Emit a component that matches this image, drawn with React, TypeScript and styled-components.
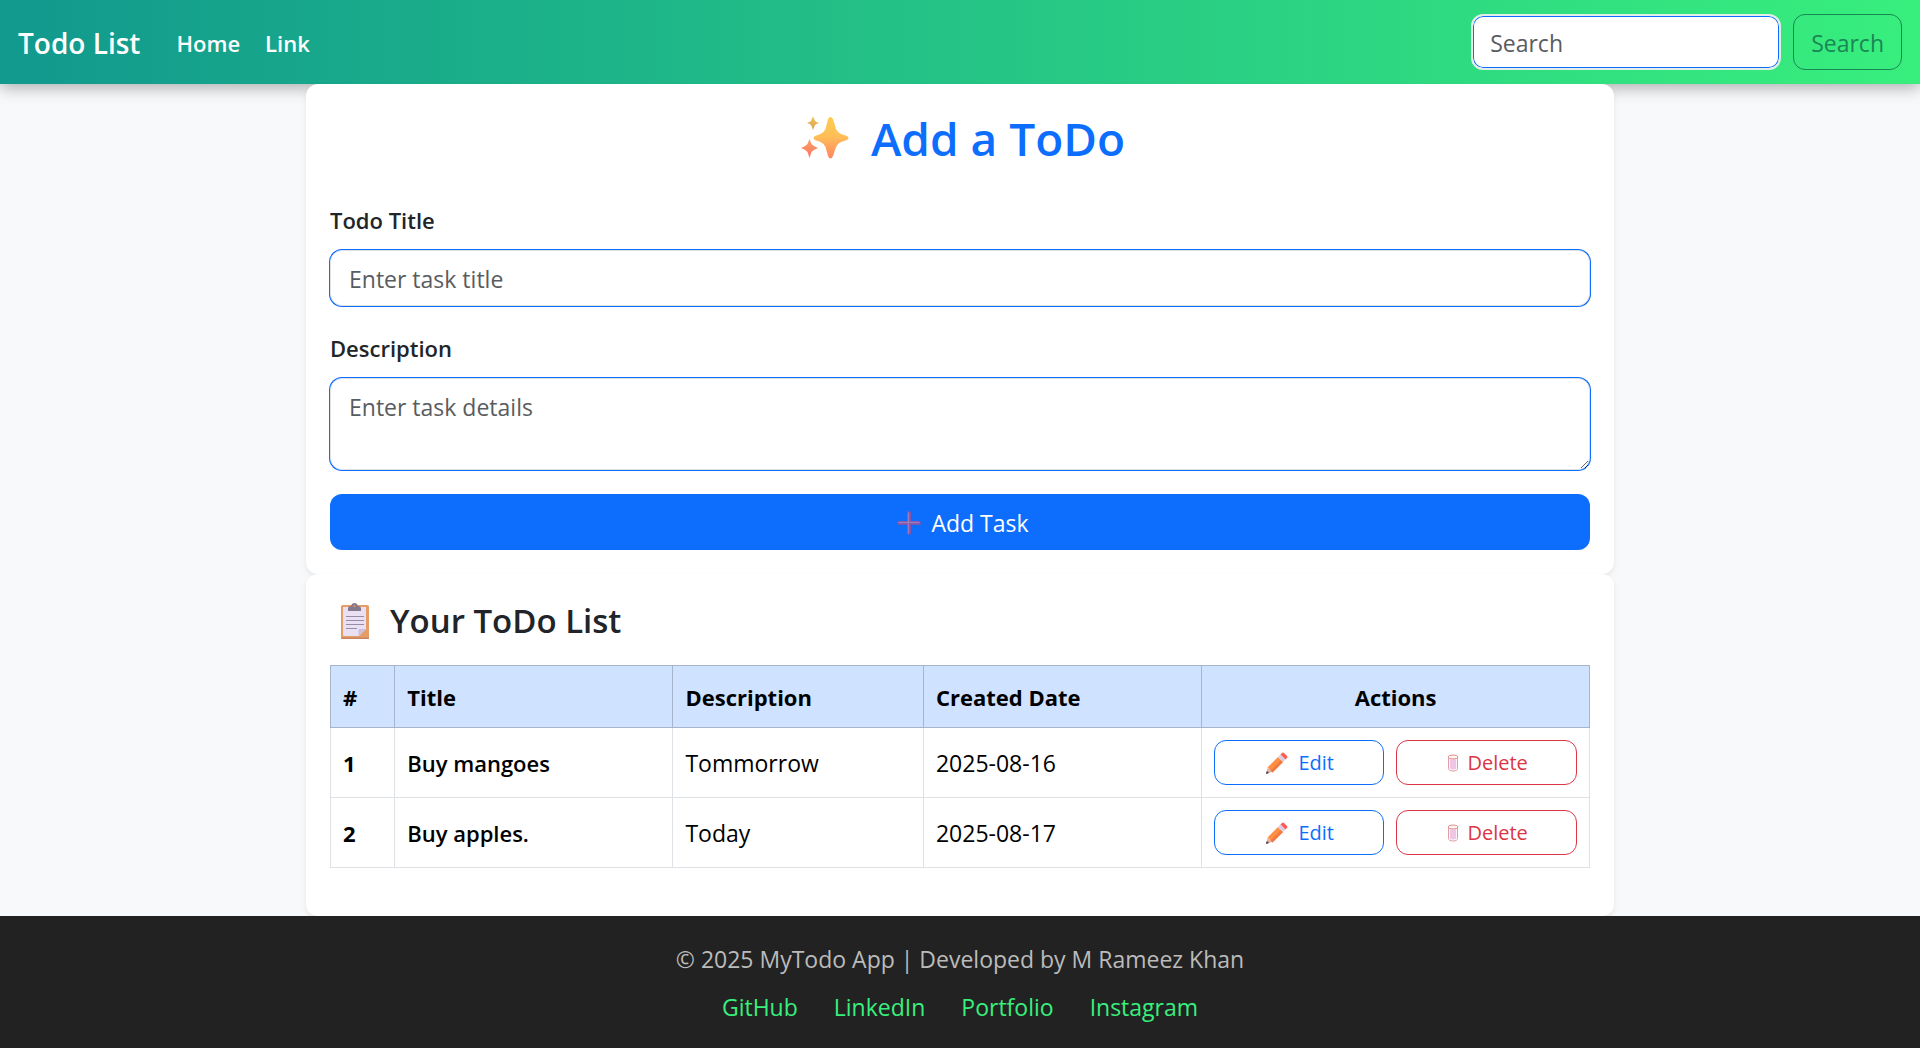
import React from 'react';
import styled, { createGlobalStyle } from 'styled-components';

const GlobalStyle = createGlobalStyle`
  *, *::before, *::after { box-sizing: border-box; }
  body {
    margin: 0;
    background: #f8f9fb;
    color: #212529;
    font-family: "Segoe UI", "Open Sans", "Noto Sans", sans-serif;
    font-size: 23px;
    line-height: 36px;
  }
  input, textarea, button { font: inherit; }
`;

const Navbar = styled.header`
  display: flex;
  align-items: center;
  height: 84px;
  padding: 2px 18px 0;
  background: linear-gradient(90deg, #11998e, #38ef7d);
  box-shadow: 0 4px 15px rgba(0, 0, 0, 0.3);
`;

const Brand = styled.a`
  margin-right: 36px;
  color: #fff;
  font-size: 28px;
  font-weight: 600;
  text-decoration: none;
`;

const NavLinks = styled.nav`
  display: flex;
  gap: 25px;
  flex: 1;
`;

const NavLink = styled.a`
  color: #fff;
  font-size: 22px;
  font-weight: 600;
  text-decoration: none;
`;

const SearchForm = styled.form`
  display: flex;
  gap: 12px;
  padding-bottom: 2px;
`;

const SearchInput = styled.input`
  width: 310px;
  height: 56px;
  padding: 2px 17px 0;
  border: 2px solid #e3eee9;
  border-radius: 12px;
  background: #fff;
  box-shadow: inset 0 0 0 1px #0d6efd;
  color: #212529;
  outline: none;
  &::placeholder { color: #595c5f; opacity: 1; }
`;

const SearchButton = styled.button`
  height: 56px;
  padding: 2px 17px 0;
  border: 1px solid #198754;
  border-radius: 12px;
  background: transparent;
  color: #198754;
`;

const Main = styled.main`
  max-width: 1308px;
  margin: 0 auto;
`;

const Card = styled.section`
  padding: 24px;
  border-radius: 12px;
  background: #fff;
  box-shadow: 0 3px 6px rgba(0, 0, 0, 0.075);
`;

const PageTitle = styled.h1`
  display: flex;
  align-items: center;
  justify-content: center;
  gap: 22px;
  margin: 0 0 36px;
  padding: 2px 0 0 6px;
  color: #0d6efd;
  font-size: 46px;
  font-weight: 600;
  line-height: 56px;
`;

const SectionTitle = styled.h2`
  display: flex;
  align-items: center;
  gap: 20px;
  margin: 0 0 24px;
  padding: 2px 0 0 10px;
  font-size: 33px;
  font-weight: 600;
  line-height: 41px;
`;

const Field = styled.div`
  display: flex;
  flex-direction: column;
  gap: 12px;
  margin-bottom: 24px;
`;

const Label = styled.label`
  font-size: 22px;
  font-weight: 600;
`;

const TextInput = styled.input`
  width: 100%;
  height: 56px;
  padding: 2px 18px 0;
  border: 1px solid #dee2e6;
  border-radius: 12px;
  background: #fff;
  box-shadow: 0 0 0 1px #0d6efd;
  color: #212529;
  outline: none;
  &::placeholder { color: #595c5f; opacity: 1; }
`;

const TextArea = styled(TextInput)`
  display: block;
  height: 92px;
  padding: 10px 18px;
  resize: vertical;
`;

const AddButton = styled.button`
  display: flex;
  align-items: center;
  justify-content: center;
  gap: 10px;
  width: 100%;
  height: 56px;
  padding: 2px 0 0 6px;
  border: 0;
  border-radius: 12px;
  background: #0d6efd;
  color: #fff;
`;

const Table = styled.table`
  width: 100%;
  margin-bottom: 24px;
  border-collapse: collapse;
  table-layout: fixed;
  color: #000;
`;

const Col = styled.col<{ $share: number }>`
  width: ${(p) => p.$share}%;
`;

const HeadCell = styled.th<{ $center?: boolean }>`
  height: 62px;
  padding: 0 12px;
  border: 1px solid #a6b5cc;
  background: #cfe2ff;
  font-size: 22px;
  font-weight: 700;
  text-align: ${(p) => (p.$center ? 'center' : 'left')};
`;

const RowNumber = styled.th`
  padding: 12px;
  border: 1px solid #dee2e6;
  font-size: 22px;
  font-weight: 700;
  text-align: left;
`;

const Cell = styled.td<{ $strong?: boolean }>`
  padding: 12px;
  border: 1px solid #dee2e6;
  font-size: ${(p) => (p.$strong ? '22px' : '23px')};
  font-weight: ${(p) => (p.$strong ? 600 : 400)};
`;

const Actions = styled.div`
  display: flex;
  gap: 12px;
`;

const ActionButton = styled.button<{ $danger?: boolean }>`
  display: flex;
  align-items: center;
  justify-content: center;
  gap: ${(p) => (p.$danger ? 8 : 10)}px;
  flex: ${(p) => (p.$danger ? 181 : 170)} 1 0;
  height: 45px;
  padding: 0 0 0 2px;
  border: 1px solid currentColor;
  border-radius: 12px;
  background: #fff;
  color: ${(p) => (p.$danger ? '#dc3545' : '#0d6efd')};
  font-size: 20px;
`;

const Footer = styled.footer`
  display: flex;
  flex-direction: column;
  align-items: center;
  gap: 12px;
  padding: 25px 0 23px;
  background: #222;
  color: #bbb;
`;

const Copyright = styled.p`
  margin: 0;
`;

const FooterLinks = styled.nav`
  display: flex;
  gap: 36px;
`;

const FooterLink = styled.a`
  color: #38ef7d;
  text-decoration: none;
`;

const Sparkles = () => (
  <svg width="48" height="44" viewBox="0 0 48 44" aria-hidden="true">
    <defs>
      <linearGradient id="spark" x1="0" y1="0" x2="0" y2="1">
        <stop offset="0" stopColor="#fbcb50" />
        <stop offset="0.45" stopColor="#ffc057" />
        <stop offset="1" stopColor="#ff8560" />
      </linearGradient>
      <linearGradient id="sparkTop" x1="0" y1="0" x2="0" y2="1">
        <stop offset="0" stopColor="#f3bd50" />
        <stop offset="1" stopColor="#d8a65b" />
      </linearGradient>
      <linearGradient id="sparkLow" x1="0" y1="0" x2="0" y2="1">
        <stop offset="0" stopColor="#f4a363" />
        <stop offset="1" stopColor="#ff7465" />
      </linearGradient>
    </defs>
    <path fill="url(#spark)" d="M27 3Q29.500-1 32 3L35 13Q36.500 16.500 40 18L46 20Q49 22 46 24L40 26Q36.500 27.500 35 31L32 40Q29.500 45 27 40L24.500 31Q23 27.500 19.500 26L14 24Q11 22 14 20L19.500 18Q23 16.500 24.500 13Z" />
    <path fill="url(#sparkTop)" d="M12 0.500L14 5Q15 6 18 7Q15 8 14 9L12 14L10 9Q9 8 6 7Q9 6 10 5Z" />
    <path fill="url(#sparkLow)" d="M8.500 23L10.500 28Q12 30 17 32Q12 34 10.500 36L8.500 42L6.500 36Q5 34 0 32Q5 30 6.500 28Z" />
  </svg>
);

const PlusSign = () => (
  <svg width="24" height="24" viewBox="0 0 24 24" aria-hidden="true">
    <path d="M12 2V22M2 12H22" stroke="#8053b3" strokeWidth="4" strokeLinecap="round" />
    <path d="M11.500 2V22M2 11.500H22" stroke="#9a7bb6" strokeWidth="1.500" strokeLinecap="round" />
  </svg>
);

const Clipboard = () => (
  <svg width="30" height="36" viewBox="0 0 30 36" aria-hidden="true">
    <rect x="1" y="2" width="28" height="34" rx="1.500" fill="#e59d65" />
    <path d="M1 34.500H29V35Q29 36 28 36H2Q1 36 1 35Z" fill="#c98364" />
    <path d="M3 4H26V26L19 33H4Q3 33 3 32Z" fill="#e9e0f3" />
    <path d="M18.500 33V27Q18.500 26 19.500 26H26Z" fill="#cdbfdc" />
    <path d="M8 8V5Q8 3.500 11 3Q12 0 14.500 0T18 3Q21 3.500 21 5V8Z" fill="#83798a" />
    <circle cx="14.500" cy="3" r="1" fill="#e59d65" />
    <path d="M6 13.500H24M6 17.500H24M6 21.500H24M6 25.500H17" stroke="#978ca3" strokeWidth="1.200" />
  </svg>
);

const Pencil = () => (
  <svg width="22" height="22" viewBox="0 0 22 22" aria-hidden="true">
    <path d="M0 22L1.500 16L6 20Z" fill="#d9b5a8" />
    <path d="M0 22L0.800 19L3 21Z" fill="#49303f" />
    <path d="M1.500 15.500L12 5L17 10L6.500 20.500Z" fill="#ff8f43" />
    <path d="M4.500 18.500L15 8L17 10L6.500 20.500Z" fill="#f27a42" />
    <path d="M12 5L14.500 2.500L19.500 7.500L17 10Z" fill="#dccde6" />
    <path d="M14.500 2.500L16 1Q17 0 18 1L21 4Q22 5 21 6L19.500 7.500Z" fill="#ff5d52" />
  </svg>
);

const Bin = () => (
  <svg width="12" height="18" viewBox="0 0 12 18" aria-hidden="true">
    <path d="M1.500 4V14.500Q1.500 17 6 17T10.500 14.500V4" fill="#fdf3f8" stroke="#dfa0a5" />
    <path d="M4 5.500V15M6 5.500V15.500M8 5.500V15" stroke="#df8fd0" strokeWidth="0.900" />
    <ellipse cx="6" cy="3" rx="5" ry="2" fill="#fff6f2" stroke="#dd8d8a" />
  </svg>
);

const todos = [
  { id: 1, title: 'Buy mangoes', description: 'Tommorrow', date: '2025-08-16' },
  { id: 2, title: 'Buy apples.', description: 'Today', date: '2025-08-17' },
];

const profiles = ['GitHub', 'LinkedIn', 'Portfolio', 'Instagram'];

export default function App() {
  return (
    <>
      <GlobalStyle />
      <Navbar>
        <Brand href="#">Todo List</Brand>
        <NavLinks>
          <NavLink href="#">Home</NavLink>
          <NavLink href="#">Link</NavLink>
        </NavLinks>
        <SearchForm role="search" onSubmit={(e) => e.preventDefault()}>
          <SearchInput type="search" placeholder="Search" aria-label="Search" />
          <SearchButton type="submit">Search</SearchButton>
        </SearchForm>
      </Navbar>
      <Main>
        <Card>
          <PageTitle><Sparkles />Add a ToDo</PageTitle>
          <form onSubmit={(e) => e.preventDefault()}>
            <Field>
              <Label htmlFor="title">Todo Title</Label>
              <TextInput id="title" type="text" placeholder="Enter task title" />
            </Field>
            <Field>
              <Label htmlFor="desc">Description</Label>
              <TextArea as="textarea" id="desc" placeholder="Enter task details" />
            </Field>
            <AddButton type="submit"><PlusSign />Add Task</AddButton>
          </form>
        </Card>
        <Card>
          <SectionTitle><Clipboard />Your ToDo List</SectionTitle>
          <Table>
            <colgroup>
              <Col $share={5.1} />
              <Col $share={22.1} />
              <Col $share={19.9} />
              <Col $share={22.1} />
              <Col $share={30.8} />
            </colgroup>
            <thead>
              <tr>
                <HeadCell scope="col">#</HeadCell>
                <HeadCell scope="col">Title</HeadCell>
                <HeadCell scope="col">Description</HeadCell>
                <HeadCell scope="col">Created Date</HeadCell>
                <HeadCell scope="col" $center>Actions</HeadCell>
              </tr>
            </thead>
            <tbody>
              {todos.map((todo) => (
                <tr key={todo.id}>
                  <RowNumber scope="row">{todo.id}</RowNumber>
                  <Cell $strong>{todo.title}</Cell>
                  <Cell>{todo.description}</Cell>
                  <Cell>{todo.date}</Cell>
                  <Cell>
                    <Actions>
                      <ActionButton type="button"><Pencil />Edit</ActionButton>
                      <ActionButton type="button" $danger><Bin />Delete</ActionButton>
                    </Actions>
                  </Cell>
                </tr>
              ))}
            </tbody>
          </Table>
        </Card>
      </Main>
      <Footer>
        <Copyright>© 2025 MyTodo App | Developed by M Rameez Khan</Copyright>
        <FooterLinks>
          {profiles.map((name) => (
            <FooterLink key={name} href="#">{name}</FooterLink>
          ))}
        </FooterLinks>
      </Footer>
    </>
  );
}
